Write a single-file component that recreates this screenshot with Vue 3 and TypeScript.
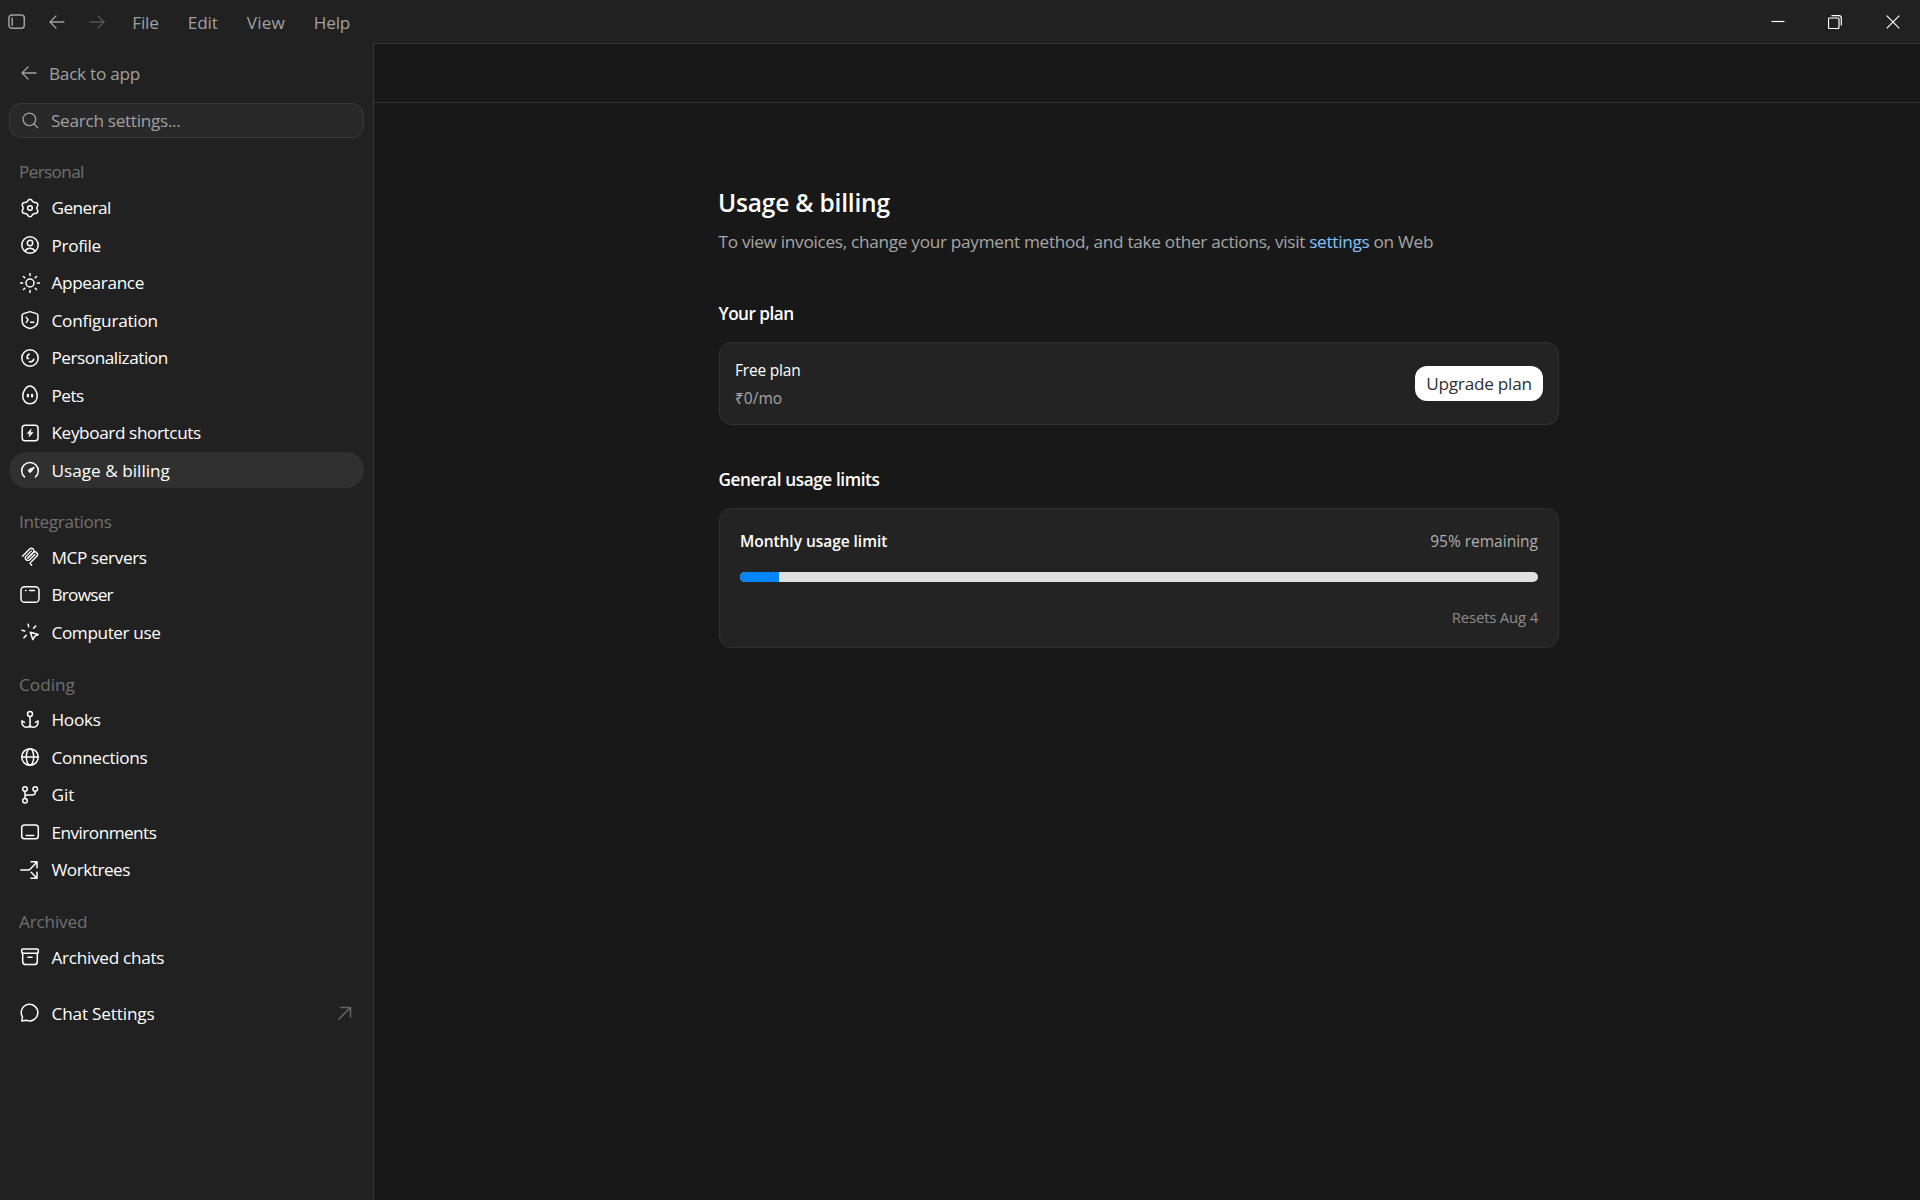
<script setup lang="ts">
interface Label { label: string; tracking: number }
interface Item extends Label { icon: string }
interface Section { title: string; tracking: number; items: Item[] }

const menus: Label[] = [
  { label: 'File', tracking: -0.2 },
  { label: 'Edit', tracking: -0.1 },
  { label: 'View', tracking: 0.1 },
  { label: 'Help', tracking: -0.2 },
]

const sections: Section[] = [
  { title: 'Personal', tracking: -0.66, items: [
    { label: 'General', icon: 'gear', tracking: -0.55 },
    { label: 'Profile', icon: 'profile', tracking: -0.35 },
    { label: 'Appearance', icon: 'sun', tracking: -0.36 },
    { label: 'Configuration', icon: 'shield', tracking: -0.26 },
    { label: 'Personalization', icon: 'face', tracking: -0.47 },
    { label: 'Pets', icon: 'egg', tracking: -0.5 },
    { label: 'Keyboard shortcuts', icon: 'key', tracking: -0.4 },
    { label: 'Usage & billing', icon: 'gauge', tracking: 0 },
  ] },
  { title: 'Integrations', tracking: -0.34, items: [
    { label: 'MCP servers', icon: 'mcp', tracking: -0.39 },
    { label: 'Browser', icon: 'browser', tracking: -0.76 },
    { label: 'Computer use', icon: 'cursor', tracking: -0.4 },
  ] },
  { title: 'Coding', tracking: 0, items: [
    { label: 'Hooks', icon: 'anchor', tracking: -0.3 },
    { label: 'Connections', icon: 'globe', tracking: -0.35 },
    { label: 'Git', icon: 'git', tracking: -0.1 },
    { label: 'Environments', icon: 'env', tracking: -0.54 },
    { label: 'Worktrees', icon: 'tree', tracking: -0.5 },
  ] },
  { title: 'Archived', tracking: -0.18, items: [
    { label: 'Archived chats', icon: 'archive', tracking: -0.3 },
  ] },
]
const active = 'Usage & billing'

const spacing = (l: { tracking: number }) => ({ letterSpacing: `${l.tracking}px` })

// Six-lobed gear outline, sampled every five degrees
const gear = 'M' + Array.from({ length: 72 }, (_, i) => {
  const a = (i * Math.PI) / 36
  const c = Math.cos(6 * (a + Math.PI / 2))
  const r = 7.75 + 0.9 * Math.sign(c) * Math.pow(Math.abs(c), 0.75)
  return `${(10 + r * Math.cos(a)).toFixed(2)} ${(10 + r * Math.sin(a)).toFixed(2)}`
}).join('L') + 'Z'

const icons: Record<string, string> = {
  gear: `<path d="${gear}"/><circle cx="10" cy="10" r="2.3"/>`,
  profile: '<circle cx="10" cy="10" r="8.2"/><circle cx="10" cy="8" r="2.7"/><path d="M5 16.2c1.1-1.9 2.9-2.9 5-2.9s3.9 1 5 2.9"/>',
  sun: '<circle cx="10" cy="10" r="4"/><path d="M10 .6v2M10 17.4v2M.6 10h2M17.4 10h2M3.5 3.5l1.3 1.3M15.2 15.2l1.3 1.3M3.5 16.5l1.3-1.3M15.2 4.8l1.3-1.3"/>',
  shield: '<path d="M10 1.6 16.4 3.6Q17.9 4.2 17.9 5.6V10.5C17.9 15 14.5 17.7 10 18.4 5.5 17.7 2.1 15 2.1 10.5V5.6Q2.1 4.2 3.6 3.6Z"/><path d="M6.3 7.4 8.2 9.9 6.3 12.4M10.6 12.3h3.2"/>',
  face: '<circle cx="10" cy="10" r="8.2"/><path d="M9.2 6C7.600 7 6.800 8.700 7.200 10.500H8.700M9.300 13.700c2.200.4 3.800-.5 4.400-2.500"/>',
  egg: '<path d="M10 1C14 1 17.2 6.6 17.2 11.3c0 4.3-3 7.4-7.2 7.4s-7.2-3.1-7.2-7.4C2.8 6.6 6 1 10 1Z"/><path stroke-width="2.3" d="M7.9 9.8v1.6M12.1 9.8v1.6"/>',
  key: '<rect x="2.2" y="2.2" width="15.8" height="15.6" rx="2.8"/><path fill="currentColor" stroke-width=".6" d="M11 6.200 7.200 10.600H9.600L9.200 13.800 13 9.400H10.600Z"/>',
  gauge: '<path d="M4.5 16.9A8.3 8.3 0 1 1 15.5 16.9"/><path fill="currentColor" stroke-width="1" d="M14.2 7.6 11.4 11.5A1.6 1.6 0 1 1 9.3 9.2Z"/>',
  mcp: '<g transform="translate(.6 .3) scale(.105)" stroke-width="13"><path d="M18 84.85 85.88 16.97C95.25 7.6 110.45 7.6 119.82 16.97 129.2 26.34 129.2 41.54 119.82 50.91L68.56 102.18"/><path d="M69.27 101.47 119.82 50.91C129.2 41.54 144.39 41.54 153.76 50.91L154.12 51.27C163.49 60.64 163.49 75.83 154.12 85.21L92.72 146.6C89.6 149.72 89.6 154.79 92.72 157.91L105.33 170.52"/><path d="M102.85 33.94 52.65 84.15C43.28 93.52 43.28 108.71 52.65 118.09 62.02 127.46 77.22 127.46 86.59 118.09L136.79 67.88"/></g>',
  browser: '<rect x="1" y="1.7" width="18" height="15.6" rx="3.6"/><path d="M5.6 5.5h.4M9.7 5.5h4.6"/>',
  cursor: '<path d="M10.3 10.2 18.2 12.5 14.9 14.2 12.8 17.6Z"/><path d="M8.7 4.8 8.1 2.3M4.8 8.9 2 8.2M6.2 13.4 3.9 15.7M13.5 6.3 15.7 4.1"/>',
  anchor: '<circle cx="10" cy="3.9" r="2.5"/><path d="M10 6.4V17.2M4.5 12.3 1.9 10.9C1.6 15 3.6 17.3 6.5 17.3 8.3 17.3 9.4 16.5 10 15.2 10.6 16.5 11.7 17.3 13.5 17.3 16.4 17.3 18.4 15 18.1 10.9L15.5 12.3"/>',
  globe: '<circle cx="10" cy="10" r="8.3"/><ellipse cx="10" cy="10" rx="3.7" ry="8.3"/><path d="M1.7 10h16.6"/>',
  git: '<circle cx="5" cy="4" r="2.3"/><circle cx="15.2" cy="4" r="2.3"/><circle cx="5" cy="15.8" r="2.3"/><path d="M5 6.3v7.2M15.2 6.3v1.3q0 2.3-2.3 2.3H7.3Q5 9.9 5 12"/>',
  env: '<rect x="1.7" y="3" width="16.6" height="13.8" rx="2.8"/><path d="M6.3 13.5h7.4"/>',
  tree: '<path d="M.8 10H8Q9.3 10 10.3 9L16.7 2.2M11 1.8h6v6M11.2 12.3l5.5 5.7M17 12.3v6H11"/>',
  archive: '<rect x="1.7" y="1.9" width="16.6" height="4.3" rx="1.2"/><path d="M2.7 6.2v8.2q0 3.2 3.2 3.2h8.2q3.2 0 3.2-3.2V6.2M7.9 10.2h4.2"/>',
  chat: '<path d="M1.8 17.9 2.5 14A8.3 8.3 0 1 1 6.2 17.2Z"/>',
}
</script>

<template>
  <div class="window">
    <header class="titlebar">
      <svg class="i panel" viewBox="0 0 18 16"><rect x=".9" y=".9" width="15.4" height="13.4" rx="3"/><path d="M4.2 4v7.2"/></svg>
      <svg class="i arrow" viewBox="0 0 16 14"><path d="M15 7H1M7 1 1 7l6 6"/></svg>
      <svg class="i arrow fwd" viewBox="0 0 16 14"><path d="M1 7h14M9 1l6 6-6 6"/></svg>
      <nav class="menus"><span v-for="m in menus" :key="m.label" :style="spacing(m)">{{ m.label }}</span></nav>
      <div class="controls">
        <svg viewBox="0 0 14 14"><path d="M.5 6.5h13"/></svg>
        <svg viewBox="0 0 14 14"><rect x=".5" y="3" width="10.5" height="10.5" rx="1"/><path d="M3.5.7h7.5q2.3 0 2.3 2.3v7.5"/></svg>
        <svg viewBox="0 0 14 14"><path d="m.7.7 12.6 12.6M13.3.7.7 13.3"/></svg>
      </div>
    </header>
    <div class="body">
      <aside class="sidebar">
        <div class="back"><svg class="i arrow" viewBox="0 0 16 14"><path d="M15 7H1M7 1 1 7l6 6"/></svg><span>Back to app</span></div>
        <div class="search"><svg class="i" viewBox="0 0 18 18"><circle cx="7.8" cy="7.8" r="6.7"/><path d="m12.8 12.8 4 4"/></svg><span>Search settings...</span></div>
        <section v-for="s in sections" :key="s.title" class="section">
          <h2 :style="spacing(s)">{{ s.title }}</h2>
          <div v-for="it in s.items" :key="it.label" class="item" :class="{ active: it.label === active }">
            <svg class="i" viewBox="0 0 20 20" v-html="icons[it.icon]" /><span :style="spacing(it)">{{ it.label }}</span>
          </div>
        </section>
        <div class="item external">
          <svg class="i" viewBox="0 0 20 20" v-html="icons.chat" /><span>Chat Settings</span>
          <svg class="i out" viewBox="0 0 14 14"><path d="M1 13 12.5 1.5M3 1.5h9.5V11"/></svg>
        </div>
      </aside>
      <main class="main">
        <div class="strip" />
        <div class="content">
          <h1>Usage &amp; billing</h1>
          <p class="lead">To view invoices, change your payment method, and take other actions, visit <a>settings</a> on Web</p>
          <h3 class="h-plan">Your plan</h3>
          <div class="card plan">
            <div class="planinfo"><div class="name">Free plan</div><div class="price">₹0/mo</div></div>
            <button>Upgrade plan</button>
          </div>
          <h3 class="h-limits">General usage limits</h3>
          <div class="card usage">
            <div class="row"><b>Monthly usage limit</b><span>95% remaining</span></div>
            <div class="bar"><div class="fill" /></div>
            <div class="reset">Resets Aug 4</div>
          </div>
        </div>
      </main>
    </div>
  </div>
</template>

<style>
body { background: #181818; overflow: hidden; }
</style>

<style scoped>
* { box-sizing: border-box; margin: 0; }
.window { width: 100vw; height: 100vh; display: flex; flex-direction: column; background: #212121; font: 17.2px/24px "Open Sans", "Noto Sans", sans-serif; color: #fff; white-space: nowrap; }
.i { fill: none; stroke: currentColor; stroke-width: 1.5; stroke-linecap: round; stroke-linejoin: round; flex: none; }
.titlebar { height: 43px; display: flex; align-items: center; color: #a0a0a0; padding-left: 8.3px; }
.panel { width: 18px; height: 16px; }
.arrow { width: 16px; height: 14px; stroke-width: 1.3; }
.titlebar .arrow { margin-left: 22.5px; }
.titlebar .fwd { margin-left: 24.5px; color: #555; }
.menus { display: flex; margin-left: 27px; gap: 29px; padding-top: 2px; }
.controls { margin-left: auto; display: flex; gap: 44px; padding-right: 20.5px; }
.controls svg { width: 14px; height: 14px; fill: none; stroke: #fff; stroke-width: 1.2; }
.controls svg:first-child { margin-right: -1px; }
.body { flex: 1; display: flex; min-height: 0; }
.sidebar { width: 373px; padding: 12px 9px 0; }
.back { height: 36px; display: flex; align-items: center; color: #a0a0a0; padding-left: 12px; gap: 12px; letter-spacing: -.26px; }
.back span { padding-top: 2px; }
.search { height: 35px; margin: 12px 0 16.25px; border: 1px solid #383838; border-radius: 12px; background: #292929; color: #a0a0a0; display: flex; align-items: center; padding-left: 12px; gap: 12px; letter-spacing: -.3px; }
.search .i { width: 17px; height: 17px; stroke-width: 1.4; }
.section + .section { margin-top: 16.2px; }
.section { display: flex; flex-direction: column; gap: 1.5px; }
h2 { font: inherit; color: #707070; height: 33.75px; line-height: 36px; padding-left: 10px; }
.item { height: 36px; display: flex; align-items: center; padding: 0 12px 0 11px; gap: 11.5px; border-radius: 18px; }
.item span { padding-top: 1px; }
.item .i { width: 20px; height: 20px; }
.active { background: #303030; }
.external { margin-top: 20px; letter-spacing: -.18px; }
.item .out { width: 14px; height: 14px; margin-left: auto; color: #666; }
.main { flex: 1; border: solid #383838; border-width: 1px 0 0 1px; background: #181818; }
.strip { height: 59px; border-bottom: 1px solid #333; }
.content { width: 840px; margin: 82px 0 0 345px; }
h1 { font-size: 24.5px; font-weight: 600; line-height: 36px; letter-spacing: -.18px; text-indent: -1px; }
.lead { color: #a6a6a6; margin-top: 8px; line-height: 26px; letter-spacing: -.29px; text-indent: -.5px; }
a { color: #83c3ff; }
h3 { font-size: 17.2px; font-weight: 600; line-height: 26px; text-indent: -.5px; }
.h-plan { margin: 46px 0 15px; letter-spacing: -.53px; }
.h-limits { margin: 42px 0 15px; letter-spacing: -.4px; }
.card { border: 1px solid #303030; border-radius: 12px; background: #232323; }
.plan { height: 83px; display: flex; align-items: center; justify-content: space-between; padding: 0 15px; }
.planinfo, .row { font-size: 15.5px; }
.name { letter-spacing: -.2px; }
.price { color: #a6a6a6; margin-top: 4px; }
button { width: 128px; height: 35px; border: 0; border-radius: 12px; background: #fff; color: #303030; font: inherit; padding: 0; letter-spacing: -.25px; }
.usage { height: 140px; padding: 20px; }
.row { display: flex; justify-content: space-between; }
.row b { font-weight: 600; letter-spacing: -.04px; }
.row span { color: #b0b0b0; }
.bar { height: 10px; margin-top: 19px; background: #dfdfdf; border-radius: 5px; overflow: hidden; }
.fill { width: 39px; height: 100%; background: #0285ff; }
.reset { text-align: right; font-size: 15px; color: #8c8c8c; margin-top: 23px; letter-spacing: -.23px; }
</style>
